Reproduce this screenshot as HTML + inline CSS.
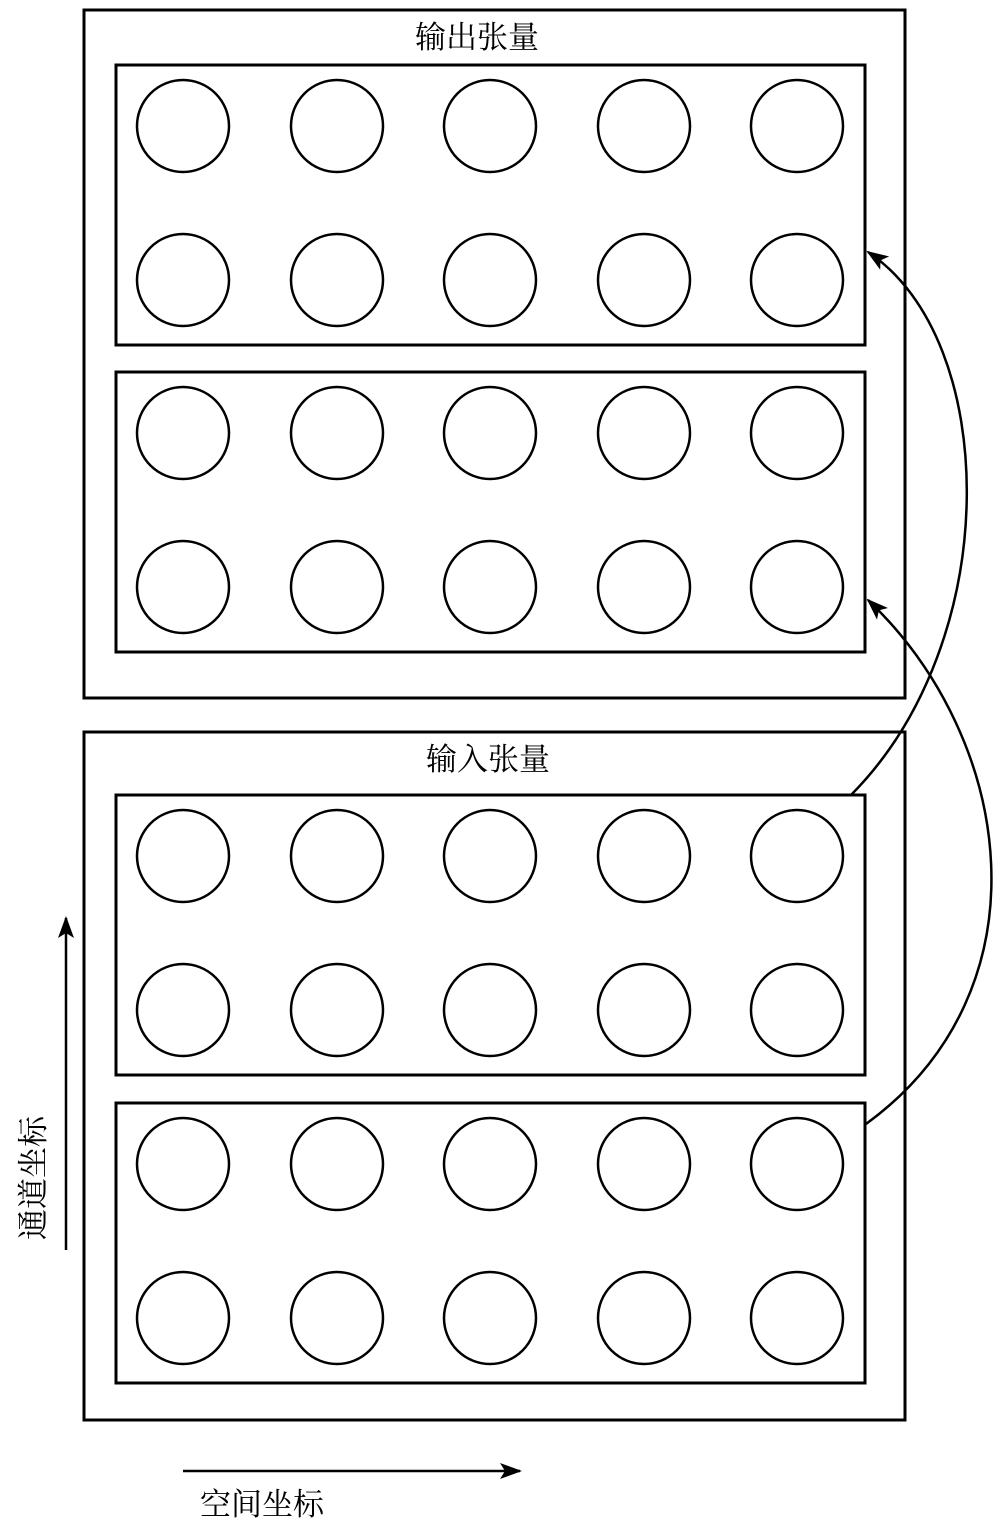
<!DOCTYPE html>
<html><head><meta charset="utf-8"><style>body{margin:0;background:#fff}svg{display:block}text{font-family:"Liberation Serif","Noto Serif CJK SC",serif;font-size:31px;fill:#000}</style></head><body>
<svg width="1000" height="1528" viewBox="0 0 1000 1528" xmlns="http://www.w3.org/2000/svg">
<defs>
<marker id="b" markerWidth="22" markerHeight="16" refX="20" refY="8" orient="auto" markerUnits="userSpaceOnUse"><path d="M0,0 L22,8 L0,16 L5,8 Z" fill="#000"/></marker>
<g id="blk"><rect x="116" y="0" width="749" height="280" fill="none" stroke="#000" stroke-width="3"/>
<g fill="none" stroke="#000" stroke-width="2.5">
<circle cx="183" cy="61" r="46"/><circle cx="337" cy="61" r="46"/><circle cx="490" cy="61" r="46"/><circle cx="644" cy="61" r="46"/><circle cx="797" cy="61" r="46"/>
<circle cx="183" cy="215" r="46"/><circle cx="337" cy="215" r="46"/><circle cx="490" cy="215" r="46"/><circle cx="644" cy="215" r="46"/><circle cx="797" cy="215" r="46"/></g></g></defs>
<rect x="84" y="10" width="821" height="688" fill="none" stroke="#000" stroke-width="3"/>
<rect x="84" y="732" width="821" height="688" fill="none" stroke="#000" stroke-width="3"/>
<use href="#blk" y="65"/><use href="#blk" y="372"/><use href="#blk" y="795"/><use href="#blk" y="1103"/>
<text x="477" y="48" text-anchor="middle">输出张量</text>
<text x="488" y="770" text-anchor="middle">输入张量</text>
<path d="M851,795 C1005,640 1000,340 868,252" fill="none" stroke="#000" stroke-width="2.5" marker-end="url(#b)"/>
<path d="M866,1124 C1050,990 1015,740 868,600" fill="none" stroke="#000" stroke-width="2.5" marker-end="url(#b)"/>
<line x1="66" y1="1250" x2="66" y2="918" stroke="#000" stroke-width="2.5" marker-end="url(#b)"/>
<line x1="183" y1="1471" x2="520" y2="1471" stroke="#000" stroke-width="2.5" marker-end="url(#b)"/>
<text x="0" y="0" transform="translate(44,1240) rotate(-90)">通道坐标</text>
<text x="200" y="1515">空间坐标</text>
</svg>
</body></html>
